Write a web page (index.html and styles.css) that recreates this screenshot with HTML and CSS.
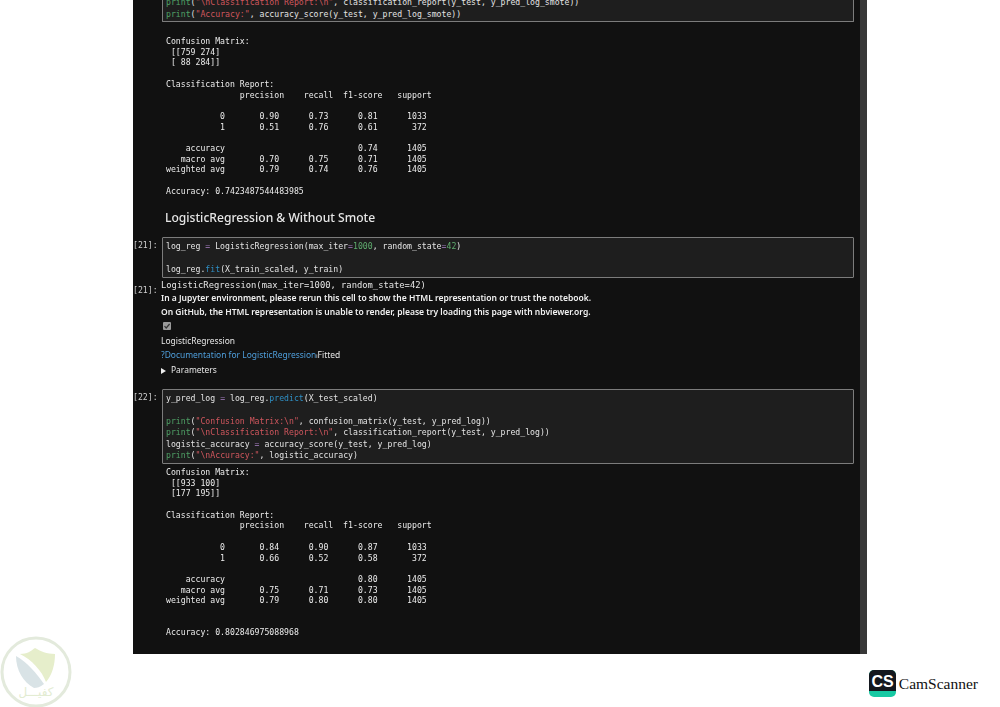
FILE: index.html
```html
<!DOCTYPE html>
<html lang="en">
<head>
<meta charset="utf-8">
<title>Notebook scan</title>
<link rel="stylesheet" href="styles.css">
</head>
<body>
<div class="page">
  <main class="sheet">
    <div class="notebook">
      <section class="cell cell-first">
        <div class="prompt"></div>
        <pre class="code"><span class="kw">print</span>(<span class="str">"\nClassification Report:\n"</span>, classification_report(y_test, y_pred_log_smote))
<span class="kw">print</span>(<span class="str">"Accuracy:"</span>, accuracy_score(y_test, y_pred_log_smote))</pre>
      </section>
      <pre class="stream stream-first">Confusion Matrix:
 [[759 274]
 [ 88 284]]

Classification Report:
               precision    recall  f1-score   support

           0       0.90      0.73      0.81      1033
           1       0.51      0.76      0.61       372

    accuracy                           0.74      1405
   macro avg       0.70      0.75      0.71      1405
weighted avg       0.79      0.74      0.76      1405

Accuracy: 0.7423487544483985</pre>
      <h2 class="heading">LogisticRegression &amp; Without Smote</h2>
      <section class="cell cell-21">
        <div class="prompt">[21]:</div>
        <pre class="code">log_reg <span class="op">=</span> LogisticRegression(max_iter<span class="op">=</span><span class="num">1000</span>, random_state<span class="op">=</span><span class="num">42</span>)

log_reg.<span class="fn">fit</span>(X_train_scaled, y_train)</pre>
      </section>
      <section class="result">
        <div class="prompt prompt-out">[21]:</div>
        <div class="result-body">
          <pre class="repr">LogisticRegression(max_iter=1000, random_state=42)</pre>
          <p class="note">In a Jupyter environment, please rerun this cell to show the HTML representation or trust the notebook.</p>
          <p class="note">On GitHub, the HTML representation is unable to render, please try loading this page with nbviewer.org.</p>
          <div class="check-row"><span class="check"><svg viewBox="0 0 8 8" width="8" height="8"><path d="M1.5 4.2 3.2 6 6.6 2" fill="none" stroke="#333" stroke-width="1.2"/></svg></span></div>
          <p class="plain">LogisticRegression</p>
          <p class="plain"><span class="link">?Documentation for LogisticRegression</span><span class="tiny">i</span>Fitted</p>
          <p class="plain params"><span class="tri"></span>Parameters</p>
        </div>
      </section>
      <section class="cell cell-22">
        <div class="prompt">[22]:</div>
        <pre class="code">y_pred_log <span class="op">=</span> log_reg.<span class="fn">predict</span>(X_test_scaled)

<span class="kw">print</span>(<span class="str">"Confusion Matrix:\n"</span>, confusion_matrix(y_test, y_pred_log))
<span class="kw">print</span>(<span class="str">"\nClassification Report:\n"</span>, classification_report(y_test, y_pred_log))
logistic_accuracy <span class="op">=</span> accuracy_score(y_test, y_pred_log)
<span class="kw">print</span>(<span class="str">"\nAccuracy:"</span>, logistic_accuracy)</pre>
      </section>
      <pre class="stream stream-last">Confusion Matrix:
 [[933 100]
 [177 195]]

Classification Report:
               precision    recall  f1-score   support

           0       0.84      0.90      0.87      1033
           1       0.66      0.52      0.58       372

    accuracy                           0.80      1405
   macro avg       0.75      0.71      0.73      1405
weighted avg       0.79      0.80      0.80      1405


Accuracy: 0.802846975088968</pre>
    </div>
    <div class="scrollbar"></div>
  </main>
  <footer class="marks">
    <svg class="seal" viewBox="0 0 72 72" width="72" height="72" aria-label="seal">
      <circle cx="36" cy="37" r="34" fill="#fff" stroke="#e3eadc" stroke-width="3"/>
      <path d="M20 19C27 19 31 16 35 13 40 16 47 19 55 19 55 30 52 40 46 47 42 36 32 25 20 19Z" fill="#e6eecb"/>
      <path d="M16 21C27 27 37 39 44 49 40 52 37 53 34 53 23 47 16 35 16 21Z" fill="#d9e3e6"/>
      <text class="seal-text" x="36" y="61" text-anchor="middle">كفيـــل</text>
    </svg>
    <div class="cam">
      <svg class="cam-icon" viewBox="0 0 27 27" width="27" height="27" aria-hidden="true">
        <rect width="27" height="27" rx="5" fill="#17c9a3"/>
        <path d="M0 5a5 5 0 0 1 5-5h17a5 5 0 0 1 5 5v16H0Z" fill="#14181f"/>
        <text class="cam-letters" x="13.5" y="16.5" text-anchor="middle">CS</text>
      </svg>
      <span class="cam-name">CamScanner</span>
    </div>
  </footer>
</div>
</body>
</html>
```
FILE: styles.css
```css
* { box-sizing: border-box; }
html, body { margin: 0; padding: 0; background: #fff; }
.page { width: 1000px; height: 707px; overflow: hidden; display: flex; flex-direction: column; }
.sheet {
  margin-left: 133px; width: 734px; height: 654px; flex: none; overflow: hidden;
  display: flex; background: #111; color: #d6d6d6;
}
.notebook { flex: 1; min-width: 0; padding-right: 6px; display: flex; flex-direction: column; align-items: stretch; filter: blur(0.3px); }
.scrollbar { width: 7px; background: #383838; }
pre, p, h2 { margin: 0; }
pre, .prompt { font-family: "DejaVu Sans Mono", monospace; font-size: 8.19px; }
.prompt { width: 29px; flex: none; color: #d0d0d0; line-height: 11.7px; padding-top: 3px; }
.cell { display: flex; }
.code {
  flex: 1; background: #1e1e1e; border: 1px solid #7c7c7c; border-radius: 1px;
  padding: 3px 3px 1px 3px; line-height: 11.7px; color: #e4e4e4; white-space: pre; overflow: hidden;
}
.cell-first { margin-top: -5px; height: 27px; }
.cell-first .code { border-top: 0; padding-top: 2px; }
.cell-22 .code { line-height: 11.55px; }
.kw { color: #4fa066; }
.str { color: #d0565d; }
.op { color: #a77fc4; }
.num { color: #5fae6f; }
.fn { color: #2f8fc4; }
.stream { margin-left: 33px; line-height: 10.7px; color: #ececec; white-space: pre; }
.stream-first { margin-top: 14px; }
.stream-last { margin-top: 3px; }
.heading {
  margin: 13px 0 0 32px; font: 500 12.1px/16px "Noto Sans", sans-serif; color: #e6e6e6;
}
.cell-21 { margin-top: 11px; }
.result { display: flex; margin-top: 0; height: 111px; }
.prompt-out { padding-top: 7px; }
.result-body { flex: 1; min-width: 0; margin-left: -1px; font-family: "Noto Sans", sans-serif; font-size: 8.45px; color: #e6e6e6; }
.repr { line-height: 15px; margin-bottom: -2px; font-size: 8.8px; }
.note { font-weight: 600; line-height: 14px; color: #f2f2f2; font-size: 8.52px; }
.check-row { height: 15px; display: flex; align-items: center; padding-left: 2px; }
.check { width: 8px; height: 8px; background: #9a9a9a; border-radius: 1px; display: flex; }
.plain { line-height: 14.4px; }
.link { color: #4f9fdc; }
.tiny { font-size: 5px; }
.params { display: flex; align-items: center; }
.tri { width: 0; height: 0; border-left: 5px solid #eee; border-top: 3px solid transparent; border-bottom: 3px solid transparent; margin-right: 5px; }
.cell-22 { margin-top: 0; }
.marks { display: flex; justify-content: space-between; align-items: flex-end; margin-top: -17px; padding: 0 22px 0 0; height: 70px; }
.seal { display: block; flex: none; }
.seal-text { font: 12px "DejaVu Sans", sans-serif; fill: #e3ecd2; }
.cam { display: flex; align-items: center; gap: 3px; margin-bottom: 10px; }
.cam-icon { display: block; }
.cam-letters { font: 700 16px "Liberation Sans", sans-serif; fill: #fff; }
.cam-name { font: 15.5px "Liberation Serif", serif; color: #111; }
```
